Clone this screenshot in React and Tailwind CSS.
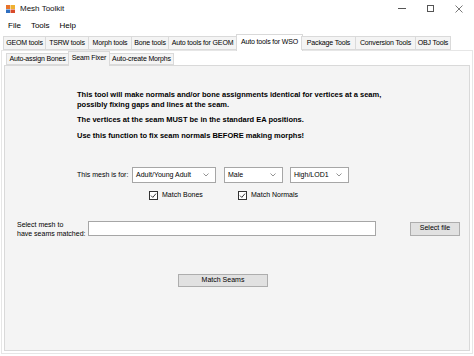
import React from "react";

const font = { fontFamily: '"Liberation Sans", Arial, sans-serif' };

function Chevron() {
  return (
    <svg width="6" height="4" viewBox="0 0 6 4" className="shrink-0">
      <path d="M0.5 0.5 L3 3 L5.5 0.5" fill="none" stroke="#666" strokeWidth="0.7" />
    </svg>
  );
}

function Combo({ w, text }) {
  return (
    <div
      className="h-[16px] border border-[#a6a6a6] bg-white flex items-center justify-between pl-[3px] pr-[6px] text-[7px] text-black"
      style={{ width: w }}
    >
      <span>{text}</span>
      <Chevron />
    </div>
  );
}

function Check({ label }) {
  return (
    <div className="flex items-center gap-[4px]">
      <div className="w-[9px] h-[9px] border border-[#333] bg-white flex items-center justify-center">
        <svg width="7" height="7" viewBox="0 0 7 7">
          <path d="M1 3.6 L2.8 5.4 L6 1.6" fill="none" stroke="#222" strokeWidth="0.9" />
        </svg>
      </div>
      <span className="text-[7px] text-black">{label}</span>
    </div>
  );
}

export default function App() {
  const mainTabs = [
    ["GEOM tools", 43],
    ["TSRW tools", 44],
    ["Morph tools", 44],
    ["Bone tools", 38],
    ["Auto tools for GEOM", 69],
    ["Auto tools for WSO", 67],
    ["Package Tools", 55],
    ["Conversion Tools", 61],
    ["OBJ Tools", 36],
  ];
  const subTabs = [
    ["Auto-assign Bones", 63],
    ["Seam Fixer", 42],
    ["Auto-create Morphs", 65],
  ];
  return (
    <div className="w-[474px] h-[356px] bg-white overflow-hidden flex flex-col text-black whitespace-nowrap" style={font}>
      {/* Title bar */}
      <div className="h-[17px] flex items-center shrink-0">
        <div className="ml-[6px] mr-[5px]">
          <svg width="9" height="8" viewBox="0 0 9 8">
            <rect x="0" y="0" width="4" height="4" fill="#e8732a" />
            <rect x="4.5" y="0" width="4.5" height="4" fill="#f0b030" />
            <rect x="0" y="4.5" width="4" height="3.5" fill="#2f6fc0" />
            <rect x="4.5" y="4.5" width="4.5" height="3.5" fill="#d84a2a" />
          </svg>
        </div>
        <span className="text-[8px] text-[#111]">Mesh Toolkit</span>
        <div className="ml-auto flex items-center h-full">
          <div className="w-[28px] flex justify-center">
            <div className="w-[8px] h-[1px] bg-[#555]" />
          </div>
          <div className="w-[28px] flex justify-center">
            <div className="w-[7px] h-[7px] border border-[#555]" />
          </div>
          <div className="w-[30px] flex justify-center">
            <svg width="8" height="8" viewBox="0 0 8 8">
              <path d="M0.5 0.5 L7.5 7.5 M7.5 0.5 L0.5 7.5" stroke="#555" strokeWidth="0.8" />
            </svg>
          </div>
        </div>
      </div>
      {/* Menu bar */}
      <div className="h-[17px] flex items-center shrink-0 text-[8px]">
        <span className="ml-[8px]">File</span>
        <span className="ml-[10px]">Tools</span>
        <span className="ml-[10px]">Help</span>
      </div>
      {/* Main tab strip */}
      <div className="h-[16px] shrink-0 flex items-end pl-[3px] relative z-10">
        {mainTabs.map(([t, w]) => {
          const sel = t === "Auto tools for WSO";
          return (
            <div
              key={t}
              className={
                sel
                  ? "h-[17px] -mb-px bg-white border border-b-0 border-[#d9d9d9] flex items-center justify-center text-[7px] tracking-[-0.15px] -mx-[1px] pb-[2px]"
                  : "h-[14px] bg-[#f4f4f4] border border-[#dadada] -ml-px first:ml-0 flex items-center justify-center text-[7px] tracking-[-0.15px]"
              }
              style={{ width: w }}
            >
              {t}
            </div>
          );
        })}
      </div>
      {/* Main tab page */}
      <div className="mx-[1px] flex-1 mb-[2px] border border-[#e6e6e6] bg-white flex flex-col px-[2px] pb-[2px]">
        <div className="h-[14px] shrink-0 flex items-end pl-[2px] relative z-10">
          {subTabs.map(([t, w]) => {
            const sel = t === "Seam Fixer";
            return (
              <div
                key={t}
                className={
                  sel
                    ? "h-[15px] -mb-px bg-[#f4f4f4] border border-b-0 border-[#d9d9d9] flex items-center justify-center text-[7px] tracking-[-0.15px] -mx-[1px] pb-[2px]"
                    : "h-[12px] bg-[#f4f4f4] border border-[#dadada] flex items-center justify-center text-[7px] tracking-[-0.15px]"
                }
                style={{ width: w }}
              >
                {t}
              </div>
            );
          })}
        </div>
        <div className="flex-1 border border-[#d9d9d9] bg-[#f4f4f4] flex flex-col">
          <div className="mt-[24px] pl-[72px] font-bold text-[7.5px] leading-[10px]">
            <div>This tool will make normals and/or bone assignments identical for vertices at a seam,</div>
            <div>possibly fixing gaps and lines at the seam.</div>
            <div className="mt-[5px]">The vertices at the seam MUST be in the standard EA positions.</div>
            <div className="mt-[6px]">Use this function to fix seam normals BEFORE making morphs!</div>
          </div>
          <div className="mt-[26px] pl-[72px] flex items-center">
            <div className="w-[48px] text-right text-[7px]">This mesh is for:</div>
            <div className="ml-[7px]"><Combo w={84} text="Adult/Young Adult" /></div>
            <div className="ml-[8px]"><Combo w={59} text="Male" /></div>
            <div className="ml-[7px]"><Combo w={59} text="High/LOD1" /></div>
          </div>
          <div className="mt-[7px] pl-[144px] flex items-center">
            <div className="w-[89px]"><Check label="Match Bones" /></div>
            <Check label="Match Normals" />
          </div>
          <div className="mt-[19px] pl-[12px] flex items-center">
            <div className="w-[70px] text-[7px] leading-[9px]">
              <div>Select mesh to</div>
              <div>have seams matched:</div>
            </div>
            <div className="ml-[1px] w-[288px] h-[15px] bg-white border border-[#a6a6a6]" />
            <div className="ml-[34px] w-[50px] h-[14px] bg-[#e1e1e1] border border-[#adadad] flex items-center justify-center text-[7px]">
              Select file
            </div>
          </div>
          <div className="mt-[36px] pl-[173px]">
            <div className="w-[90px] h-[13px] bg-[#e1e1e1] border border-[#adadad] flex items-center justify-center text-[7px]">
              Match Seams
            </div>
          </div>
        </div>
      </div>
    </div>
  );
}
